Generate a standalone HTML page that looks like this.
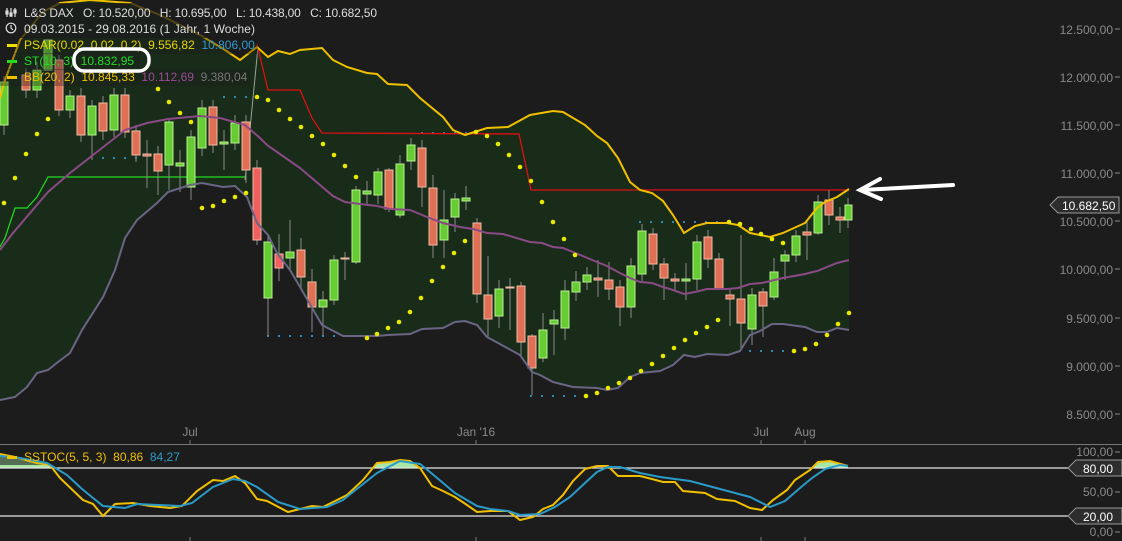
<!DOCTYPE html>
<html><head><meta charset="utf-8"><style>
html,body{margin:0;padding:0;background:#1c1c1c;width:1122px;height:541px;overflow:hidden}
svg{display:block}
text{font-family:"Liberation Sans",sans-serif;font-size:12px;white-space:pre}
.ax{fill:#8a8a8a}
.g{fill:#66cc33;stroke:#b8f090;stroke-width:1}
.r{fill:#e07055;stroke:#f0bca5;stroke-width:1}
.w{stroke:#8a8a8a;stroke-width:1}
.d{fill:#e8e800}
.b{fill:#2a8ab0}
</style></head><body>
<svg width="1122" height="541" viewBox="0 0 1122 541" xmlns="http://www.w3.org/2000/svg" xml:space="preserve">
<rect width="1122" height="541" fill="#1c1c1c"/>
<polygon fill="#192b19" points="0,98 5,80 20,40 43,12 60,3 90,0 130,3 160,15 200,35 225,50 240,60 257,47 268,57 278,51 290,54 300,50 322,48 333,60 347,67 367,73 377,74 388,84 407,85 420,98 443,117 453,130 465,135 487,128 508,127 530,115 553,111 563,112 585,125 597,136 607,143 618,158 630,182 640,190 652,193 663,201 673,215 684,233 695,226 707,223 727,223 738,225 750,233 770,237 783,233 805,223 817,208 825,202 837,197 849,189 849,330 837,328 827,332 817,332 805,327 783,324 772,324 760,331 750,335 740,351 728,355 707,354 695,357 684,355 673,365 660,371 640,373 630,377 618,388 607,390 597,388 573,387 553,382 540,375 532,372 520,355 487,337 477,325 465,321 455,322 443,328 422,329 410,334 388,335 377,336 343,336 322,325 300,287 290,270 277,253 268,235 257,223 247,197 235,186 223,187 202,183 190,185 168,192 157,203 137,220 125,238 115,270 103,297 82,330 70,353 58,362 48,370 37,373 27,387 15,397 0,400"/>
<g class="b">
<rect x="102" y="157" width="2" height="2"/><rect x="113" y="157" width="2" height="2"/><rect x="124" y="157" width="2" height="2"/><rect x="135" y="157" width="2" height="2"/>
<rect x="223" y="96" width="2" height="2"/><rect x="234" y="96" width="2" height="2"/><rect x="245" y="96" width="2" height="2"/>
<rect x="267" y="335" width="2" height="2"/><rect x="278" y="335" width="2" height="2"/><rect x="289" y="335" width="2" height="2"/><rect x="300" y="335" width="2" height="2"/><rect x="311" y="335" width="2" height="2"/><rect x="322" y="335" width="2" height="2"/><rect x="333" y="335" width="2" height="2"/><rect x="344" y="335" width="2" height="2"/>
<rect x="421" y="132" width="2" height="2"/><rect x="432" y="132" width="2" height="2"/><rect x="443" y="132" width="2" height="2"/><rect x="454" y="132" width="2" height="2"/><rect x="465" y="132" width="2" height="2"/><rect x="476" y="132" width="2" height="2"/>
<rect x="530" y="395" width="2" height="2"/><rect x="541" y="395" width="2" height="2"/><rect x="552" y="395" width="2" height="2"/><rect x="563" y="395" width="2" height="2"/><rect x="574" y="395" width="2" height="2"/>
<rect x="639" y="221" width="2" height="2"/><rect x="650" y="221" width="2" height="2"/><rect x="661" y="221" width="2" height="2"/><rect x="672" y="221" width="2" height="2"/><rect x="683" y="221" width="2" height="2"/><rect x="694" y="221" width="2" height="2"/><rect x="705" y="221" width="2" height="2"/><rect x="716" y="221" width="2" height="2"/>
<rect x="749" y="350" width="2" height="2"/><rect x="760" y="350" width="2" height="2"/><rect x="771" y="350" width="2" height="2"/><rect x="782" y="350" width="2" height="2"/>
</g>
<polyline fill="none" stroke="#22dd22" stroke-width="1.2" points="0,247 5,238 15,208 27,208 37,197 48,177 245,177"/>
<polyline fill="none" stroke="#9aa59a" stroke-width="1" points="245,180 258,47"/>
<polyline fill="none" stroke="#e01010" stroke-width="1.3" points="257,44 268,90 300,90 312,118 322,133 519,134 531,190 849,190"/>
<g class="w">
<line x1="4" y1="76" x2="4" y2="135"/><line x1="26" y1="68" x2="26" y2="98"/><line x1="37" y1="62" x2="37" y2="98"/><line x1="59" y1="55" x2="59" y2="116"/><line x1="70" y1="90" x2="70" y2="118"/><line x1="81" y1="88" x2="81" y2="142"/><line x1="92" y1="100" x2="92" y2="160"/><line x1="103" y1="96" x2="103" y2="140"/><line x1="114" y1="88" x2="114" y2="137"/><line x1="125" y1="88" x2="125" y2="138"/><line x1="136" y1="125" x2="136" y2="162"/><line x1="147" y1="140" x2="147" y2="188"/><line x1="158" y1="146" x2="158" y2="195"/><line x1="169" y1="118" x2="169" y2="190"/><line x1="180" y1="150" x2="180" y2="192"/><line x1="191" y1="130" x2="191" y2="200"/><line x1="202" y1="100" x2="202" y2="156"/><line x1="213" y1="100" x2="213" y2="153"/><line x1="224" y1="130" x2="224" y2="170"/><line x1="235" y1="115" x2="235" y2="150"/><line x1="246" y1="115" x2="246" y2="183"/><line x1="257" y1="160" x2="257" y2="245"/><line x1="268" y1="235" x2="268" y2="336"/><line x1="279" y1="234" x2="279" y2="281"/><line x1="290" y1="220" x2="290" y2="270"/><line x1="301" y1="238" x2="301" y2="290"/><line x1="312" y1="269" x2="312" y2="332"/><line x1="323" y1="291" x2="323" y2="336"/><line x1="334" y1="255" x2="334" y2="305"/><line x1="345" y1="252" x2="345" y2="280"/><line x1="356" y1="186" x2="356" y2="264"/><line x1="367" y1="181" x2="367" y2="205"/><line x1="378" y1="168" x2="378" y2="204"/><line x1="389" y1="168" x2="389" y2="212"/><line x1="400" y1="155" x2="400" y2="218"/><line x1="411" y1="138" x2="411" y2="170"/><line x1="422" y1="140" x2="422" y2="207"/><line x1="433" y1="175" x2="433" y2="258"/><line x1="444" y1="190" x2="444" y2="258"/><line x1="455" y1="193" x2="455" y2="232"/><line x1="466" y1="186" x2="466" y2="210"/><line x1="477" y1="218" x2="477" y2="303"/><line x1="488" y1="256" x2="488" y2="337"/><line x1="499" y1="280" x2="499" y2="328"/><line x1="510" y1="278" x2="510" y2="330"/><line x1="521" y1="282" x2="521" y2="357"/><line x1="532" y1="334" x2="532" y2="395"/><line x1="543" y1="313" x2="543" y2="362"/><line x1="554" y1="310" x2="554" y2="355"/><line x1="565" y1="280" x2="565" y2="340"/><line x1="576" y1="271" x2="576" y2="301"/><line x1="587" y1="267" x2="587" y2="290"/><line x1="598" y1="260" x2="598" y2="297"/><line x1="609" y1="262" x2="609" y2="300"/><line x1="620" y1="280" x2="620" y2="326"/><line x1="631" y1="258" x2="631" y2="318"/><line x1="642" y1="224" x2="642" y2="282"/><line x1="653" y1="228" x2="653" y2="270"/><line x1="664" y1="258" x2="664" y2="300"/><line x1="675" y1="273" x2="675" y2="292"/><line x1="686" y1="263" x2="686" y2="300"/><line x1="697" y1="235" x2="697" y2="290"/><line x1="708" y1="230" x2="708" y2="268"/><line x1="719" y1="253" x2="719" y2="290"/><line x1="730" y1="290" x2="730" y2="326"/><line x1="741" y1="235" x2="741" y2="350"/><line x1="752" y1="288" x2="752" y2="345"/><line x1="763" y1="288" x2="763" y2="337"/><line x1="774" y1="258" x2="774" y2="300"/><line x1="785" y1="250" x2="785" y2="280"/><line x1="796" y1="230" x2="796" y2="262"/><line x1="807" y1="220" x2="807" y2="260"/><line x1="818" y1="195" x2="818" y2="235"/><line x1="829" y1="190" x2="829" y2="225"/><line x1="840" y1="207" x2="840" y2="233"/><line x1="848" y1="198" x2="848" y2="228"/>
</g>
<g>
<rect class="g" x="0" y="82" width="8" height="43"/><rect class="r" x="22" y="75" width="8" height="15"/><rect class="g" x="33" y="70" width="8" height="20"/><rect class="g" x="44" y="40" width="8" height="30"/><rect class="r" x="55" y="60" width="8" height="50"/><rect class="g" x="66" y="96" width="8" height="14"/><rect class="r" x="77" y="96" width="8" height="39"/><rect class="g" x="88" y="106" width="8" height="29"/><rect class="r" x="99" y="103" width="8" height="28"/><rect class="g" x="110" y="95" width="8" height="35"/><rect class="r" x="121" y="95" width="8" height="37"/><rect class="r" x="132" y="131" width="8" height="24"/><rect class="r" x="143" y="154" width="8" height="2"/><rect class="r" x="154" y="154" width="8" height="17"/><rect class="g" x="165" y="122" width="8" height="43"/><rect class="g" x="176" y="163" width="8" height="3"/><rect class="g" x="187" y="137" width="8" height="50"/><rect class="g" x="198" y="108" width="8" height="40"/><rect class="r" x="209" y="107" width="8" height="38"/><rect class="g" x="220" y="142" width="8" height="2"/><rect class="g" x="231" y="123" width="8" height="20"/><rect class="r" x="242" y="122" width="8" height="48"/><rect class="r" x="253" y="168" width="8" height="72" style="fill:#f06060"/><rect class="g" x="264" y="242" width="8" height="56"/><rect class="r" x="275" y="254" width="8" height="14" style="fill:#f06060"/><rect class="g" x="286" y="252" width="8" height="6"/><rect class="r" x="297" y="250" width="8" height="27"/><rect class="r" x="308" y="282" width="8" height="25"/><rect class="g" x="319" y="300" width="8" height="7"/><rect class="g" x="330" y="260" width="8" height="40"/><rect class="r" x="341" y="258" width="8" height="1"/><rect class="g" x="352" y="190" width="8" height="72"/><rect class="g" x="363" y="191" width="8" height="3"/><rect class="g" x="374" y="172" width="8" height="23"/><rect class="r" x="385" y="170" width="8" height="39"/><rect class="g" x="396" y="164" width="8" height="51"/><rect class="g" x="407" y="145" width="8" height="16"/><rect class="r" x="418" y="148" width="8" height="39"/><rect class="r" x="429" y="188" width="8" height="57"/><rect class="g" x="440" y="220" width="8" height="20"/><rect class="g" x="451" y="199" width="8" height="18"/><rect class="g" x="462" y="198" width="8" height="3"/><rect class="r" x="473" y="223" width="8" height="71"/><rect class="r" x="484" y="295" width="8" height="24"/><rect class="g" x="495" y="289" width="8" height="27"/><rect class="r" x="506" y="287" width="8" height="1"/><rect class="r" x="517" y="286" width="8" height="56"/><rect class="r" x="528" y="336" width="8" height="32"/><rect class="g" x="539" y="330" width="8" height="28"/><rect class="g" x="550" y="320" width="8" height="4"/><rect class="g" x="561" y="291" width="8" height="37"/><rect class="g" x="572" y="282" width="8" height="10"/><rect class="g" x="583" y="275" width="8" height="7"/><rect class="r" x="594" y="278" width="8" height="2"/><rect class="r" x="605" y="280" width="8" height="9"/><rect class="r" x="616" y="287" width="8" height="20"/><rect class="g" x="627" y="266" width="8" height="41"/><rect class="g" x="638" y="231" width="8" height="43"/><rect class="r" x="649" y="234" width="8" height="30"/><rect class="r" x="660" y="264" width="8" height="14"/><rect class="r" x="671" y="279" width="8" height="2"/><rect class="g" x="682" y="279" width="8" height="2"/><rect class="g" x="693" y="242" width="8" height="37"/><rect class="r" x="704" y="237" width="8" height="22"/><rect class="r" x="715" y="259" width="8" height="30"/><rect class="r" x="726" y="295" width="8" height="4"/><rect class="r" x="737" y="299" width="8" height="24"/><rect class="g" x="748" y="295" width="8" height="34"/><rect class="r" x="759" y="292" width="8" height="14"/><rect class="g" x="770" y="272" width="8" height="25"/><rect class="g" x="781" y="255" width="8" height="6"/><rect class="g" x="792" y="236" width="8" height="19"/><rect class="r" x="803" y="232" width="8" height="3"/><rect class="g" x="814" y="202" width="8" height="31"/><rect class="r" x="825" y="200" width="8" height="15"/><rect class="r" x="836" y="217" width="8" height="3"/><rect class="g" x="845" y="205" width="7" height="15"/>
</g>
<polyline fill="none" stroke="#8a4a85" stroke-width="2" points="0,250 13,233 48,192 70,173 102,148 125,130 147,123 168,119 200,116 220,118 245,125 260,138 267,145 300,168 333,196 345,202 360,204 377,206 390,209 410,210 427,217 443,223 460,227 473,229 487,233 503,234 530,242 542,243 553,247 563,248 573,252 585,257 597,262 607,266 618,272 630,278 640,282 652,283 663,287 673,290 684,294 695,292 707,289 728,289 738,288 750,284 762,283 783,278 805,274 817,271 837,263 849,260"/>
<polyline fill="none" stroke="#6b6585" stroke-width="2" points="0,400 15,397 27,387 37,373 48,370 58,362 70,353 82,330 103,297 115,270 125,238 137,220 157,203 168,192 190,185 202,183 223,187 235,186 247,197 257,223 268,235 277,253 290,270 300,287 322,325 343,336 377,336 388,335 410,334 422,329 443,328 455,322 465,321 477,325 487,337 520,355 532,372 540,375 553,382 573,387 597,388 607,390 618,388 630,377 640,373 660,371 673,365 684,355 695,357 707,354 728,355 740,351 750,335 760,331 772,324 783,324 805,327 817,332 827,332 837,328 849,330"/>
<polyline fill="none" stroke="#f0c000" stroke-width="2" points="0,98 5,80 20,40 43,12 60,3 90,0 130,3 160,15 200,35 225,50 240,60 257,47 268,57 278,51 290,54 300,50 322,48 333,60 347,67 367,73 377,74 388,84 407,85 420,98 443,117 453,130 465,135 487,128 508,127 530,115 553,111 563,112 585,125 597,136 607,143 618,158 630,182 640,190 652,193 663,201 673,215 684,233 695,226 707,223 727,223 738,225 750,233 770,237 783,233 805,223 817,208 825,202 837,197 849,189"/>
<g class="d">
<circle cx="4" cy="203" r="2.3"/><circle cx="15" cy="178" r="2.3"/><circle cx="26" cy="154" r="2.3"/><circle cx="37" cy="134" r="2.3"/><circle cx="48" cy="119" r="2.3"/><circle cx="158" cy="89" r="2.3"/><circle cx="169" cy="102" r="2.3"/><circle cx="180" cy="113" r="2.3"/><circle cx="191" cy="122" r="2.3"/><circle cx="202" cy="208" r="2.3"/><circle cx="213" cy="206" r="2.3"/><circle cx="224" cy="201" r="2.3"/><circle cx="235" cy="197" r="2.3"/><circle cx="246" cy="193" r="2.3"/><circle cx="257" cy="97" r="2.3"/><circle cx="268" cy="100" r="2.3"/><circle cx="279" cy="110" r="2.3"/><circle cx="290" cy="119" r="2.3"/><circle cx="301" cy="127" r="2.3"/><circle cx="312" cy="136" r="2.3"/><circle cx="323" cy="144" r="2.3"/><circle cx="334" cy="155" r="2.3"/><circle cx="345" cy="166" r="2.3"/><circle cx="356" cy="177" r="2.3"/><circle cx="367" cy="338" r="2.3"/><circle cx="377" cy="334" r="2.3"/><circle cx="388" cy="328" r="2.3"/><circle cx="399" cy="322" r="2.3"/><circle cx="410" cy="312" r="2.3"/><circle cx="421" cy="298" r="2.3"/><circle cx="432" cy="281" r="2.3"/><circle cx="443" cy="267" r="2.3"/><circle cx="454" cy="253" r="2.3"/><circle cx="465" cy="241" r="2.3"/><circle cx="476" cy="132" r="2.3"/><circle cx="487" cy="136" r="2.3"/><circle cx="498" cy="144" r="2.3"/><circle cx="509" cy="155" r="2.3"/><circle cx="520" cy="167" r="2.3"/><circle cx="531" cy="181" r="2.3"/><circle cx="542" cy="202" r="2.3"/><circle cx="553" cy="222" r="2.3"/><circle cx="564" cy="239" r="2.3"/><circle cx="575" cy="255" r="2.3"/><circle cx="586" cy="396" r="2.3"/><circle cx="597" cy="393" r="2.3"/><circle cx="608" cy="388" r="2.3"/><circle cx="619" cy="383" r="2.3"/><circle cx="630" cy="378" r="2.3"/><circle cx="641" cy="371" r="2.3"/><circle cx="652" cy="364" r="2.3"/><circle cx="663" cy="356" r="2.3"/><circle cx="674" cy="348" r="2.3"/><circle cx="685" cy="340" r="2.3"/><circle cx="696" cy="333" r="2.3"/><circle cx="707" cy="327" r="2.3"/><circle cx="718" cy="320" r="2.3"/><circle cx="729" cy="222" r="2.3"/><circle cx="740" cy="224" r="2.3"/><circle cx="751" cy="229" r="2.3"/><circle cx="761" cy="234" r="2.3"/><circle cx="772" cy="239" r="2.3"/><circle cx="783" cy="243" r="2.3"/><circle cx="794" cy="351" r="2.3"/><circle cx="805" cy="349" r="2.3"/><circle cx="816" cy="344" r="2.3"/><circle cx="827" cy="335" r="2.3"/><circle cx="838" cy="324" r="2.3"/><circle cx="849" cy="313" r="2.3"/>
</g>
<rect x="0" y="3" width="383" height="17" fill="#1c1c1c" fill-opacity="0.75"/>
<rect x="0" y="20" width="258" height="18" fill="#1c1c1c" fill-opacity="0.75"/>
<rect x="0" y="37" width="258" height="17" fill="#1c1c1c" fill-opacity="0.35"/>
<rect x="0" y="53" width="140" height="17" fill="#1c1c1c" fill-opacity="0.35"/>
<rect x="0" y="69" width="250" height="17" fill="#1c1c1c" fill-opacity="0.35"/>
<g stroke="#ddd" stroke-width="1.2" fill="none"><line x1="7" y1="8" x2="7" y2="17"/><line x1="11" y1="8" x2="11" y2="17"/><line x1="15" y1="8" x2="15" y2="17"/><rect x="6" y="11" width="2" height="3" fill="#ddd"/><rect x="10" y="13" width="2" height="3" fill="#ddd"/><rect x="14" y="10" width="2" height="3" fill="#ddd"/><circle cx="11" cy="28" r="4.8"/><polyline points="11,25 11,28 13,30"/></g>
<text x="24" y="17" fill="#dddddd" textLength="353">L&amp;S DAX   O: 10.520,00   H: 10.695,00   L: 10.438,00   C: 10.682,50</text>
<text x="24" y="33" fill="#dddddd" textLength="231">09.03.2015 - 29.08.2016 (1 Jahr, 1 Woche)</text>
<rect x="7" y="44" width="10" height="3" fill="#f0e000"/>
<text x="24" y="49" fill="#e8d800">PSAR(0.02, 0.02, 0.2)  9.556,82  <tspan fill="#3399cc">10.806,00</tspan></text>
<rect x="7" y="60" width="10" height="3" fill="#22dd22"/>
<text x="24" y="65" fill="#22dd22">ST(10, 3)  10.832,95</text>
<rect x="7" y="76" width="10" height="3" fill="#f0c000"/>
<text x="24" y="81" fill="#f0c000">BB(20, 2)  10.845,33  <tspan fill="#9a4a95">10.112,69</tspan>  <tspan fill="#777">9.380,04</tspan></text>
<rect x="74" y="49" width="75" height="22" rx="10" fill="none" stroke="#fff" stroke-width="3.5"/>
<g stroke="#fff" stroke-width="4" stroke-linecap="round" fill="none"><line x1="953" y1="185" x2="862" y2="190"/><polyline points="880,179 860,190 881,199"/></g>
<g class="ax" text-anchor="end">
<text x="1113" y="34">12.500,00</text><text x="1113" y="82">12.000,00</text><text x="1113" y="130">11.500,00</text><text x="1113" y="178">11.000,00</text><text x="1113" y="226">10.500,00</text><text x="1113" y="274">10.000,00</text><text x="1113" y="323">9.500,00</text><text x="1113" y="371">9.000,00</text><text x="1113" y="419">8.500,00</text>
</g>
<g stroke="#8a8a8a"><line x1="1115" y1="29" x2="1120" y2="29"/><line x1="1115" y1="77" x2="1120" y2="77"/><line x1="1115" y1="125" x2="1120" y2="125"/><line x1="1115" y1="173" x2="1120" y2="173"/><line x1="1115" y1="221" x2="1120" y2="221"/><line x1="1115" y1="269" x2="1120" y2="269"/><line x1="1115" y1="318" x2="1120" y2="318"/><line x1="1115" y1="366" x2="1120" y2="366"/><line x1="1115" y1="414" x2="1120" y2="414"/></g>
<polygon points="1050,205 1058,197 1119,197 1119,213 1058,213" fill="#2d2d2d" stroke="#999" stroke-width="1"/>
<text x="1062" y="210" fill="#fff">10.682,50</text>
<g class="ax" text-anchor="middle"><text x="190" y="436">Jul</text><text x="476" y="436">Jan '16</text><text x="761" y="436">Jul</text><text x="805" y="436">Aug</text></g>
<line x1="0" y1="444.5" x2="1122" y2="444.5" stroke="#777" stroke-width="1"/>
<g stroke="#777"><line x1="190" y1="440" x2="190" y2="444"/><line x1="476" y1="440" x2="476" y2="444"/><line x1="761" y1="440" x2="761" y2="444"/><line x1="805" y1="440" x2="805" y2="444"/><line x1="190" y1="537" x2="190" y2="541"/><line x1="476" y1="537" x2="476" y2="541"/><line x1="761" y1="537" x2="761" y2="541"/><line x1="805" y1="537" x2="805" y2="541"/></g>
<polygon fill="#a8e6a8" points="0,454 15,457 37,463 50,465 52,468 0,468"/>
<polygon fill="#a8e6a8" points="372,468 377,463 390,462 400,460 410,461 420,468"/>
<polygon fill="#a8e6a8" points="813,468 818,462 830,461 848,466 848,468"/>
<line x1="0" y1="468" x2="1068" y2="468" stroke="#e6e6e6" stroke-width="1.3"/>
<line x1="0" y1="516" x2="1068" y2="516" stroke="#e6e6e6" stroke-width="1.3"/>
<rect x="0" y="448" width="186" height="17" fill="#1c1c1c" fill-opacity="0.6"/>
<polyline fill="none" stroke="#f0c000" stroke-width="2" points="0,454 15,457 37,463 50,465 60,478 83,500 93,504 103,516 115,504 133,503 150,506 170,508 182,506 197,491 213,480 223,481 235,476 245,483 257,499 267,501 288,512 300,509 312,506 323,507 347,495 363,480 377,463 390,462 400,460 410,461 420,468 432,486 443,491 455,497 467,505 477,512 490,511 508,511 520,520 533,517 543,509 553,505 563,495 573,481 585,469 597,466 608,466 618,476 640,476 652,479 663,482 675,482 683,491 705,493 717,499 735,501 750,508 762,510 773,500 787,490 795,480 810,470 818,462 830,461 848,466"/>
<polyline fill="none" stroke="#2a9ac8" stroke-width="2" points="0,456 20,458 47,463 67,475 82,489 103,506 125,508 137,504 180,506 192,503 213,487 233,479 245,481 257,487 278,502 300,509 327,507 343,500 358,488 377,473 400,461 420,464 430,472 455,493 477,506 490,509 508,511 520,515 540,514 555,507 570,497 585,483 597,472 608,467 620,467 640,473 660,477 690,481 720,489 750,497 770,507 785,501 800,488 812,478 825,469 840,465 848,466"/>
<rect x="7" y="456" width="10" height="3" fill="#f0c000"/>
<text x="24" y="461" fill="#f0c000">SSTOC(5, 5, 3)  80,86  <tspan fill="#2a9ac8">84,27</tspan></text>
<g class="ax" text-anchor="end"><text x="1113" y="456">100,00</text><text x="1113" y="496">50,00</text><text x="1113" y="536">0,00</text></g>
<g stroke="#8a8a8a"><line x1="1115" y1="452" x2="1120" y2="452"/><line x1="1115" y1="492" x2="1120" y2="492"/><line x1="1115" y1="532" x2="1120" y2="532"/></g>
<polygon points="1068,468 1076,460 1122,460 1122,476 1076,476" fill="#2d2d2d" stroke="#999" stroke-width="1"/>
<text x="1083" y="473" fill="#fff">80,00</text>
<polygon points="1068,516 1076,508 1122,508 1122,524 1076,524" fill="#2d2d2d" stroke="#999" stroke-width="1"/>
<text x="1083" y="521" fill="#fff">20,00</text>
</svg>
</body></html>
